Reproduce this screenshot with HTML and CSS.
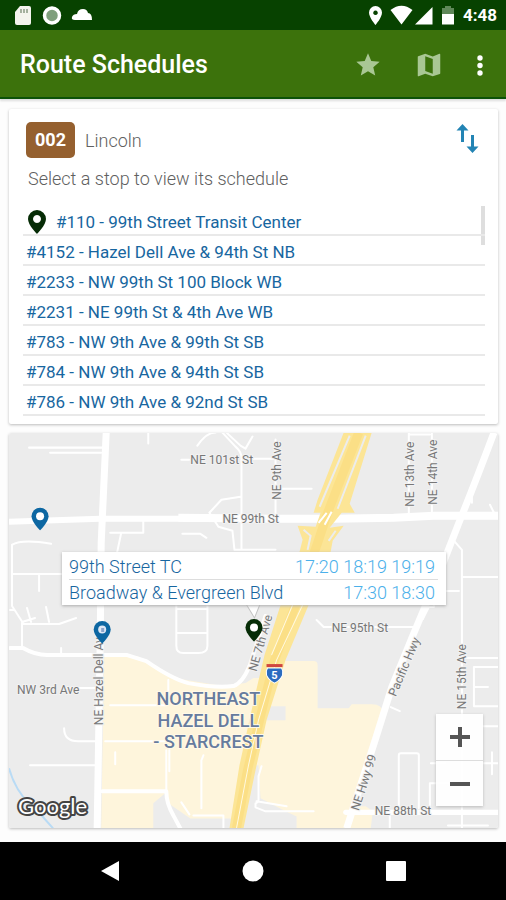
FILE: index.html
```html
<!DOCTYPE html>
<html lang="en">
<head>
<meta charset="utf-8">
<meta name="viewport" content="width=device-width, initial-scale=1">
<title>Route Schedules</title>
<link rel="stylesheet" href="styles.css">
</head>
<body>
<div class="status">
  <svg class="status-left" width="80" height="30" viewBox="14 0 80 30" aria-hidden="true">
    <path d="M20 6h9q2 0 2 2v15q0 2-2 2H17q-2 0-2-2V12z" fill="#f4f4ee"/>
    <path d="M21 9v4M24 9v4M27 9v4" stroke="#8b9a85" stroke-width="1.5"/>
    <circle cx="52" cy="15.500" r="7.500" fill="#7f9f7c" stroke="#fff" stroke-width="3.500"/>
    <path d="M75 20q-4 0-3-3 1-3 5-3 1-5 6-5 4 0 5 4 4 0 4 7z" fill="#fff"/>
  </svg>
  <div class="status-right">
    <svg width="88" height="30" viewBox="367 0 88 30" aria-hidden="true">
      <path fill-rule="evenodd" d="M375.500 6a6.500 6.500 0 0 1 6.500 6.500c0 5-6.500 12.500-6.500 12.500s-6.500-7.500-6.500-12.500a6.500 6.500 0 0 1 6.500-6.500zm0 4.500a2.300 2.300 0 1 0 .01 0z" fill="#fff"/>
      <path d="M390.500 10q11-8.500 22 0L401.500 24.500zM432.500 7v17.500H415z" fill="#fff"/>
      <path d="M442 8h3V6h6v2h3v6h-12z" fill="#5f8859"/><path d="M442 14h12v10.500h-12z" fill="#fff"/>
    </svg>
    <time>4:48</time>
  </div>
</div>
<header class="appbar">
  <h1>Route Schedules</h1>
  <button type="button" aria-label="Favorites"><svg width="28" height="28" viewBox="0 0 24 24"><path d="M12 17.270 18.180 21l-1.640-7.030L22 9.240l-7.190-.61L12 2 9.190 8.630 2 9.240l5.460 4.730L5.820 21z" fill="#a9c794"/></svg></button>
  <button type="button" aria-label="Map"><svg width="30" height="30" viewBox="0 0 24 24"><path d="M20.500 3l-.16.03L15 5.100 9 3 3.360 4.900c-.21.07-.36.25-.36.48V20.500c0 .28.220.5.500.5l.16-.03L9 18.900l6 2.100 5.640-1.900c.21-.07.36-.25.36-.48V3.500c0-.28-.22-.5-.5-.5zM15 19l-6-2.110V5l6 2.110V19z" fill="#a9c794"/></svg></button>
  <button type="button" aria-label="More options"><svg width="8" height="28" viewBox="0 0 8 28"><g fill="#fff"><circle cx="4" cy="7" r="2.700"/><circle cx="4" cy="14.500" r="2.700"/><circle cx="4" cy="22" r="2.700"/></g></svg></button>
</header>
<main>
  <section class="card route">
    <div class="route-head">
      <span class="badge">002</span>
      <span class="name">Lincoln</span>
      <button type="button" aria-label="Reverse direction"><svg width="24" height="32" viewBox="456 124 24 32"><path d="M462.500 142v-14M472.500 135v14" stroke="#2384b4" stroke-width="3"/><path d="M456.500 130.500l6-6.500 6 6.500zM466.500 146.500l6 6.500 6-6.500z" fill="#2384b4"/></svg></button>
    </div>
    <p>Select a stop to view its schedule</p>
    <ul>
      <li><a href="#110"><svg width="20" height="24" viewBox="0 0 20 24"><path fill-rule="evenodd" d="M10 0a9 9 0 0 1 9 9c0 6-9 15-9 15S1 15 1 9a9 9 0 0 1 9-9zm0 5a4 4 0 1 0 .01 0z" fill="#062c06"/></svg>#110 - 99th Street Transit Center</a></li>
      <li><a href="#4152">#4152 - Hazel Dell Ave &amp; 94th St NB</a></li>
      <li><a href="#2233">#2233 - NW 99th St 100 Block WB</a></li>
      <li><a href="#2231">#2231 - NE 99th St &amp; 4th Ave WB</a></li>
      <li><a href="#783">#783 - NW 9th Ave &amp; 99th St SB</a></li>
      <li><a href="#784">#784 - NW 9th Ave &amp; 94th St SB</a></li>
      <li><a href="#786">#786 - NW 9th Ave &amp; 92nd St SB</a></li>
    </ul>
  </section>
  <section class="card map" aria-label="Map">
    <svg class="canvas" viewBox="9 433 488 395" preserveAspectRatio="xMidYMid slice">
      <rect x="9" y="433" width="489" height="395" fill="#ececec"/>
      <g fill="#fef5dc">
        <path d="M104 656h33l19 12 24 11 42 7 23-3 8-5 10 0-22 82-10 58h-41l-22-15-2-11-13 11v25h-52z"/>
        <path d="M270 661h43q4 0 4 4v43h31l3-4h20q11 0 11 9l-5 18-12 36-21 61h-48v-12l-13-6-23-12-2-33h-22z"/>
        <path d="M345 806h20l7 5-2 17h-25z"/>
      </g>
      <path d="M267 706h18v14h-22z" fill="#ececec"/>
      <g fill="none" stroke="#fff" stroke-width="2" stroke-linejoin="round" stroke-linecap="round">
        <path d="M29 448h73M50 453h51M148 433v11M197 446q9-13 18-13M226 433l14 13 5 3 7-12M222 433l13 14q6 5 6 11v92M181 460h8M253 459h20M209 513l12-13 19-3M209 513l9 14 14 4 2 19h41M110 533h33v-12M121 533l-4 19M182 534h18l6 4"/>
        <path d="M12 545q10-6 39-1M12 545v61l11 17h-1v24M12 574h50M39 575v16M10 610h4M22 624h37l17-6M27 608l4 14M46 607l3 15M22 622l13-4M61 648v6M63 688h35M64 728q0 13 14 13h20M30 765h65M110 705h56M105 741h60M168 680v20M166 750v41M169 750v21M203 755l-2 5v48M115 752v12M181 802l8 12M193 815h30v13M176 605v41q0 7 7 7h15q9 0 9-7v-41M176 609h30M176 633h30"/>
        <path d="M275 440v78M275 489h36M408 433v84M431 433v84M409 435h20M471 498v5M489 505l4 8M454 542l7 8v278M461 577h36M443 591h15M433 602v5h-5l-6 12M461 658h36M497 667h-24v39h24M473 687h14M482 726h15M491 752v22M482 763h15M430 763h14M398 808v-53q0-2 2-2h16q2 0 2 2v53M429 811v-28h18M389 812v16M261 766l-3 10v24q0 2-3 3v4l10 4h48M256 801l30 5M390 707l9 4M316 620l7 7h90M447 825h40"/>
        <path d="M10 648h13q12 7 24 7h80l19 6q26 18 42 22 26 5 45 3 9-3 16-20l16-50" stroke-width="4"/>
        <path d="M102 791h64q0 12 7 24l7 13" stroke-width="4"/>
        <path d="M345 812h152" stroke-width="5"/>
      </g>
      <g fill="none" stroke="#fff">
        <path d="M106 433l-5 110-1 100-3 185" stroke-width="7"/>
        <path d="M9 522l91-3h100" stroke-width="6"/>
        <path d="M178 518l95 1h60l60-1 40-2h65" stroke-width="8"/>
        <path d="M493 433q-18 48-35 90l-18 46-29 69-20 49-16 51-29 90" stroke-width="7"/>
        <path d="M9 768q6 22 21 36 13 12 23 24" stroke="#b9dbf5" stroke-width="2"/>
      </g>
      <path d="M343 433H371L349 504 354 513H341L329 528 343 526 332 541 330 552 308 605 285 660 266 720 255 770 243 828H229L239 765 252 706 264 655 280 605 299 552 302 540 297 526 315 527 320 513H313L317 500z" fill="#fce596"/>
      <path d="M358 433L327 513 317 543 295 605 274 660 260 716 247 770 236 828" fill="none" stroke="#fbdf86" stroke-width="9"/>
      <g fill="none" stroke="#ececec" stroke-width="2">
        <path d="M349 436L319 507M365 436L337 509"/>
        <path d="M303 530L310 536 307 550M335 531L328 541"/>
      </g>
      <g fill="none" stroke="#fff9e0" stroke-width="1">
        <path d="M292 605L271 655M302 605L276 660 258 720 248 765 236 828"/>
      </g>
      <path d="M318 523L326 513M324 525L331 512" stroke="#fff" stroke-width="2"/>
      <g class="streets">
        <text x="190" y="464">NE 101st St</text><text x="222" y="523">NE 99th St</text>
        <text x="331" y="632">NE 95th St</text><text x="374" y="815">NE 88th St</text><text x="17" y="694">NW 3rd Ave</text>
        <text transform="translate(280 500) rotate(-90)">NE 9th Ave</text>
        <text transform="translate(413 507) rotate(-90)">NE 13th Ave</text>
        <text transform="translate(436 505) rotate(-90)">NE 14th Ave</text>
        <text transform="translate(465 709) rotate(-90)">NE 15th Ave</text>
        <text transform="translate(103 725) rotate(-90)">NE Hazel Dell Ave</text>
        <text transform="translate(256 672) rotate(-74)">NE 7th Ave</text>
        <text transform="translate(395 697) rotate(-67)">Pacific Hwy</text>
        <text transform="translate(358 811) rotate(-72)">NE Hwy 99</text>
      </g>
      <g class="area"><text x="208" y="705">NORTHEAST</text><text x="208" y="727">HAZEL DELL</text><text x="208" y="748">- STARCREST</text></g>
      <path d="M267 668h14q2 3 1 7-2 5-8 8-6-3-8-8-1-4 1-7z" fill="#2b6cc0" stroke="#fff"/>
      <path d="M266 664h16v3h-16z" fill="#d0463f"/>
      <text class="shield" x="274" y="679">5</text>
      <path d="M40 508a8.500 8.500 0 0 1 8.500 8.500c0 6-8.500 14-8.500 14s-8.500-8-8.500-14a8.500 8.500 0 0 1 8.500-8.500z" fill="#0d67a2"/>
      <circle cx="40" cy="516.500" r="4" fill="#fff"/>
      <path d="M102 621a8.500 8.500 0 0 1 8.500 8.500c0 6-8.500 14-8.500 14s-8.500-8-8.500-14a8.500 8.500 0 0 1 8.500-8.500z" fill="#0d67a2"/>
      <circle cx="102" cy="629.500" r="4" fill="#dfe8f5"/><path d="M101 628h3v4h-3z" fill="#8ca5cb"/>
      <path d="M245 603l9 15 6-15z" fill="#fff" stroke="#c4c4c4"/>
      <path d="M253.500 619a8.500 8.500 0 0 1 8.500 8.500c0 6-8.500 14-8.500 14s-8.500-8-8.500-14a8.500 8.500 0 0 1 8.500-8.500z" fill="#062c06"/>
      <circle cx="253.500" cy="627.500" r="4" fill="#fff"/>
      <text class="google" x="18" y="814">Google</text>
    </svg>
    <div class="popup">
      <div><span>99th Street TC</span><time>17:20 18:19 19:19</time></div>
      <div><span>Broadway &amp; Evergreen Blvd</span><time>17:30 18:30</time></div>
    </div>
    <div class="zoom">
      <button type="button" aria-label="Zoom in"><svg width="22" height="22" viewBox="0 0 22 22"><path d="M1 11h20M11 1v20" stroke="#555" stroke-width="4"/></svg></button>
      <button type="button" aria-label="Zoom out"><svg width="22" height="22" viewBox="0 0 22 22"><path d="M1 11h20" stroke="#555" stroke-width="4"/></svg></button>
    </div>
  </section>
</main>
<nav>
  <button type="button" aria-label="Back"><svg width="22" height="22" viewBox="0 0 22 22"><path d="M2 11 20 1v20z" fill="#fff"/></svg></button>
  <button type="button" aria-label="Home"><svg width="22" height="22" viewBox="0 0 22 22"><circle cx="11" cy="11" r="10.500" fill="#fff"/></svg></button>
  <button type="button" aria-label="Recent apps"><svg width="22" height="22" viewBox="0 0 22 22"><rect x="1" y="1" width="20" height="20" rx="1" fill="#fff"/></svg></button>
</nav>
</body>
</html>
```
FILE: styles.css
```css
* { box-sizing: border-box; }
body {
  margin: 0;
  min-height: 100vh;
  display: flex;
  flex-direction: column;
  background: #fdfdfd;
  font-family: Roboto, sans-serif;
}
button { padding: 0; border: 0; background: none; display: grid; place-items: center; }
svg { display: block; }
a { color: inherit; text-decoration: none; }
.status {
  height: 30px;
  padding: 0 9px 0 14px;
  display: flex;
  justify-content: space-between;
  background: #074200;
  color: #fff;
}
.status-right { display: flex; align-items: center; gap: 8px; }
.status time { font-size: 17px; font-weight: 700; line-height: 32px; }
.appbar {
  height: 69px;
  padding: 2px 22px 0 20px;
  display: flex;
  align-items: center;
  gap: 32px;
  background: #3c720c;
  border-bottom: 2px solid #0c5208;
  box-shadow: 0 2px 2px #ddd;
  color: #fff;
}
h1 { flex: 1; margin: 0; font-size: 25px; font-weight: 500; line-height: 32px; }
main {
  flex: 1;
  padding: 10px 8px 14px 9px;
  display: flex;
  flex-direction: column;
  gap: 9px;
}
.card { border-radius: 2px; background: #fff; box-shadow: 0 1px 3px #bbb; }
.route { padding: 13px 13px 8px 14px; }
.route-head { display: flex; align-items: center; gap: 10px; padding: 0 5px 0 3px; }
.badge {
  padding: 0 9px;
  border-radius: 5px;
  background: #95602f;
  color: #fff;
  font-size: 18px;
  font-weight: 700;
  line-height: 36px;
}
.name { flex: 1; }
.name, .route p { color: #606060; font-size: 18px; font-weight: 300; }
.route p { margin: 9px 5px 15px; line-height: 24px; }
ul {
  margin: 0;
  padding: 0;
  list-style: none;
  background: linear-gradient(#dedede, #dedede) right top / 4px 39px no-repeat;
}
li { height: 30px; padding: 2px 3px 0; border-bottom: 2px solid #e9e9e9; }
li a { display: flex; align-items: center; gap: 9px; color: #1766a0; font-size: 17px; line-height: 28px; }
li svg { margin-left: 1px; }
.map { flex: 1; min-height: 395px; position: relative; overflow: hidden; }
.canvas { width: 100%; height: 100%; position: absolute; }
.streets { fill: #777; font-size: 12px; stroke: #f2f2f2; stroke-width: 2px; paint-order: stroke; }
.area { fill: #667b9e; font-size: 18px; font-weight: 500; text-anchor: middle; stroke: #fff9e8; stroke-width: 2px; paint-order: stroke; }
.shield { fill: #fff; font-size: 11px; font-weight: 700; text-anchor: middle; }
.google { fill: #fff; font-family: Lato, sans-serif; font-size: 22px; font-weight: 400; stroke: #444; stroke-width: 4px; paint-order: stroke; stroke-linejoin: round; }
.popup {
  position: absolute;
  top: 119px;
  left: 53px;
  right: 52px;
  padding: 2px 8px 0 7px;
  background: #fff;
  box-shadow: 0 1px 3px #aaa;
  font-size: 18px;
  font-weight: 300;
  line-height: 25px;
  color: #1766a0;
}
.popup div { display: flex; justify-content: space-between; padding: 0 3px 0 0; }
.popup div + div { border-top: 1px solid #ddd; }
.popup time { color: #4bb0ea; }
.zoom { position: absolute; right: 15px; bottom: 22px; background: rgba(255, 255, 255, .92); box-shadow: 0 1px 3px #bbb; }
.zoom button { width: 47px; height: 46px; }
.zoom button + button { border-top: 1px solid #ddd; }
nav { height: 58px; display: flex; justify-content: space-around; padding: 0 39px; background: #000; }
```
